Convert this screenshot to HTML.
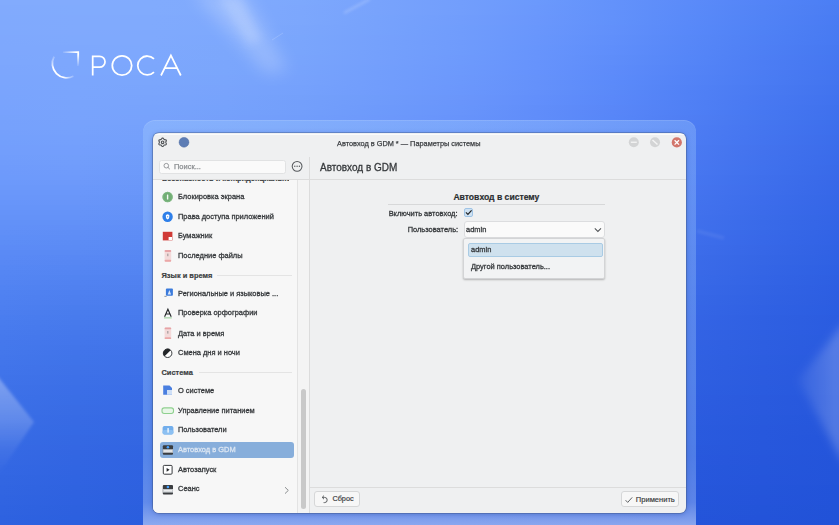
<!DOCTYPE html>
<html><head><meta charset="utf-8">
<style>
html,body{margin:0;padding:0;width:839px;height:525px;overflow:hidden}
body{position:relative;font-family:"Liberation Sans",sans-serif;background:#4f80f0}
#bg{position:absolute;left:0;top:0;width:839px;height:525px}
#bg i{position:absolute;left:0;width:839px;height:5px;display:block}
.abs{position:absolute}
#frame{position:absolute;left:143px;top:120px;width:553px;height:420px;border-radius:12px;
 background:linear-gradient(180deg,rgba(170,210,255,.3) 0%,rgba(170,210,255,.3) 80%,rgba(190,215,255,.36) 91%,rgba(220,232,255,.55) 96.5%);box-shadow:inset 0 1px 0 rgba(255,255,255,.12)}
#win{position:absolute;left:153px;top:133px;width:533px;height:380px;border-radius:6px;background:#eff0f1;overflow:hidden;
 box-shadow:0 0 0 .8px rgba(60,80,120,.45),0 1px 5px rgba(20,50,140,.35)}
.t{position:absolute;white-space:nowrap;line-height:1;font-size:7.45px;color:#3a3d40;-webkit-text-stroke:.18px currentColor}
#side .t:not(.b),.s{font-size:7.85px;transform:scaleX(.95);transform-origin:0 0;-webkit-text-stroke:.3px currentColor;color:#35383b}
.s.r{transform-origin:100% 0}
.b{font-weight:bold}
#side{position:absolute;left:0;top:46px;width:144px;height:334px;background:#f7f7f7;overflow:hidden}
#groove{position:absolute;left:144px;top:46px;width:12px;height:334px;background:#f4f4f4;border-left:1px solid #e3e3e3;box-sizing:border-box}
#handle{position:absolute;left:148px;top:256px;width:5px;height:120px;border-radius:3px;background:#c9c9c9}
.vline{position:absolute;width:1px;background:#dcdcdc}
.hline{position:absolute;height:1px;background:#dcdcdc}
.btn{position:absolute;box-sizing:border-box;border:1px solid #d6d7d8;border-radius:3px;background:#f7f7f7}
.ic{position:absolute}
</style></head><body>
<div id="bg"><i style="top:0px;background:linear-gradient(90deg,#82abfd 0%,#82abfd 9%,#81abfd 18%,#80aafd 27%,#7da8fd 36%,#78a3fc 45%,#729efc 55%,#6b99fc 64%,#6392fb 73%,#5b8bf9 82%,#5384f7 91%,#4b7ef4 100%)"></i><i style="top:5px;background:linear-gradient(90deg,#81aafd 0%,#81abfd 9%,#81abfd 18%,#80aafd 27%,#7da7fd 36%,#78a3fc 45%,#729efc 55%,#6b98fc 64%,#6392fb 73%,#5a8bf9 82%,#5284f6 91%,#4b7df3 100%)"></i><i style="top:10px;background:linear-gradient(90deg,#81aafd 0%,#81abfd 9%,#81abfd 18%,#7faafd 27%,#7ca7fd 36%,#78a3fc 45%,#729efc 55%,#6a98fc 64%,#6291fb 73%,#5a8af9 82%,#5283f6 91%,#4a7df3 100%)"></i><i style="top:15px;background:linear-gradient(90deg,#80aafd 0%,#81aafd 9%,#80aafd 18%,#7fa9fd 27%,#7ca7fd 36%,#77a3fc 45%,#719dfc 55%,#6a97fc 64%,#6291fb 73%,#598af9 82%,#5183f6 91%,#497cf3 100%)"></i><i style="top:20px;background:linear-gradient(90deg,#80a9fd 0%,#80aafd 9%,#80aafd 18%,#7fa9fd 27%,#7ca7fc 36%,#77a2fc 45%,#719dfc 55%,#6a97fc 64%,#6191fb 73%,#5989f9 82%,#5182f6 91%,#497bf3 100%)"></i><i style="top:25px;background:linear-gradient(90deg,#80a9fd 0%,#80aafd 9%,#80aafd 18%,#7ea9fd 27%,#7ba6fc 36%,#77a2fc 45%,#709dfc 55%,#6997fc 64%,#6190fb 73%,#5889f9 82%,#5082f6 91%,#487bf2 100%)"></i><i style="top:30px;background:linear-gradient(90deg,#7fa9fd 0%,#80a9fd 9%,#7fa9fd 18%,#7ea9fd 27%,#7ba6fc 36%,#76a2fc 45%,#709cfc 55%,#6996fc 64%,#6190fb 73%,#5888f9 82%,#4f81f5 91%,#487af2 100%)"></i><i style="top:35px;background:linear-gradient(90deg,#7fa8fd 0%,#7fa9fd 9%,#7fa9fd 18%,#7da8fd 27%,#7aa6fc 36%,#76a1fc 45%,#709cfc 55%,#6896fc 64%,#608ffb 73%,#5788f8 82%,#4f80f5 91%,#477af2 100%)"></i><i style="top:40px;background:linear-gradient(90deg,#7ea8fd 0%,#7fa9fd 9%,#7fa9fd 18%,#7da8fd 27%,#7aa5fc 36%,#75a1fc 45%,#6f9bfc 55%,#6895fc 64%,#608ffb 73%,#5787f8 82%,#4e80f5 91%,#4779f2 100%)"></i><i style="top:45px;background:linear-gradient(90deg,#7ea8fd 0%,#7ea8fd 9%,#7ea9fd 18%,#7da8fc 27%,#7aa5fc 36%,#75a1fc 45%,#6f9bfc 55%,#6795fc 64%,#5f8efb 73%,#5687f8 82%,#4e7ff5 91%,#4678f1 100%)"></i><i style="top:50px;background:linear-gradient(90deg,#7ea7fd 0%,#7ea8fd 9%,#7ea8fd 18%,#7ca7fc 27%,#79a5fc 36%,#74a0fc 45%,#6e9bfc 55%,#6794fc 64%,#5f8efb 73%,#5686f8 82%,#4d7ff4 91%,#4578f1 100%)"></i><i style="top:55px;background:linear-gradient(90deg,#7da7fd 0%,#7ea8fd 9%,#7da8fd 18%,#7ca7fc 27%,#79a4fc 36%,#74a0fc 45%,#6e9afc 55%,#6794fc 64%,#5e8dfa 73%,#5586f8 82%,#4d7ef4 91%,#4577f1 100%)"></i><i style="top:60px;background:linear-gradient(90deg,#7da7fd 0%,#7da7fd 9%,#7da7fd 18%,#7ba6fc 27%,#78a4fc 36%,#749ffc 45%,#6d9afc 55%,#6693fc 64%,#5e8dfa 73%,#5585f7 82%,#4c7df4 91%,#4477f0 100%)"></i><i style="top:65px;background:linear-gradient(90deg,#7ca6fd 0%,#7da7fd 9%,#7ca7fc 18%,#7ba6fc 27%,#78a3fc 36%,#739ffc 45%,#6d99fc 55%,#6693fc 64%,#5d8cfa 73%,#5484f7 82%,#4c7df4 91%,#4476f0 100%)"></i><i style="top:70px;background:linear-gradient(90deg,#7ca6fd 0%,#7ca7fd 9%,#7ca7fc 18%,#7aa6fc 27%,#77a3fc 36%,#729efc 45%,#6c99fc 55%,#6592fc 64%,#5d8bfa 73%,#5484f7 82%,#4b7cf3 91%,#4375f0 100%)"></i><i style="top:75px;background:linear-gradient(90deg,#7ba6fd 0%,#7ca6fd 9%,#7ba6fc 18%,#7aa5fc 27%,#77a2fc 36%,#729efc 45%,#6c98fc 55%,#6592fb 64%,#5c8bfa 73%,#5383f7 82%,#4a7cf3 91%,#4375ef 100%)"></i><i style="top:80px;background:linear-gradient(90deg,#7ba5fd 0%,#7ba6fd 9%,#7ba6fc 18%,#79a5fc 27%,#76a2fc 36%,#719dfc 45%,#6b98fc 55%,#6491fb 64%,#5b8afa 73%,#5383f6 82%,#4a7bf3 91%,#4274ef 100%)"></i><i style="top:85px;background:linear-gradient(90deg,#7aa5fd 0%,#7ba6fd 9%,#7aa5fc 18%,#79a4fc 27%,#75a1fc 36%,#719dfc 45%,#6b97fc 55%,#6491fb 64%,#5b8af9 73%,#5282f6 82%,#497af2 91%,#4173ef 100%)"></i><i style="top:90px;background:linear-gradient(90deg,#7aa4fd 0%,#7aa5fd 9%,#7aa5fc 18%,#78a3fc 27%,#75a1fc 36%,#709cfc 45%,#6a97fc 55%,#6390fb 64%,#5a89f9 73%,#5181f6 82%,#497af2 91%,#4173ee 100%)"></i><i style="top:95px;background:linear-gradient(90deg,#79a4fd 0%,#7aa5fd 9%,#79a4fc 18%,#77a3fc 27%,#74a0fb 36%,#6f9cfb 45%,#6a96fb 55%,#628ffb 64%,#5a88f9 73%,#5181f6 82%,#4879f2 91%,#4072ee 100%)"></i><i style="top:100px;background:linear-gradient(90deg,#79a3fd 0%,#79a4fc 9%,#79a4fc 18%,#77a2fc 27%,#739ffb 36%,#6f9bfb 45%,#6995fb 55%,#628ffb 64%,#5988f9 73%,#5080f5 82%,#4878f1 91%,#4072ee 100%)"></i><i style="top:105px;background:linear-gradient(90deg,#78a3fd 0%,#79a4fc 9%,#78a3fc 18%,#76a2fc 27%,#739ffb 36%,#6e9afb 45%,#6895fb 55%,#618efa 64%,#5987f8 73%,#5080f5 82%,#4778f1 91%,#3f71ed 100%)"></i><i style="top:110px;background:linear-gradient(90deg,#78a2fd 0%,#78a3fc 9%,#77a3fc 18%,#75a1fb 27%,#729efb 36%,#6d9afb 45%,#6894fb 55%,#608dfa 64%,#5886f8 73%,#4f7ff5 82%,#4677f1 91%,#3f70ed 100%)"></i><i style="top:115px;background:linear-gradient(90deg,#77a2fc 0%,#78a3fc 9%,#77a2fc 18%,#75a0fb 27%,#719dfb 36%,#6d99fb 45%,#6793fb 55%,#608dfa 64%,#5786f8 73%,#4f7ef4 82%,#4677f0 91%,#3e70ed 100%)"></i><i style="top:120px;background:linear-gradient(90deg,#76a1fc 0%,#77a2fc 9%,#76a2fc 18%,#74a0fb 27%,#709dfb 36%,#6c98fb 45%,#6693fa 55%,#5f8cf9 64%,#5785f7 73%,#4e7ef4 82%,#4576f0 91%,#3d6fec 100%)"></i><i style="top:125px;background:linear-gradient(90deg,#76a1fc 0%,#76a2fc 9%,#75a1fc 18%,#739ffb 27%,#709cfb 36%,#6b98fa 45%,#6592fa 55%,#5e8bf9 64%,#5684f7 73%,#4d7df4 82%,#4575f0 91%,#3d6eec 100%)"></i><i style="top:130px;background:linear-gradient(90deg,#75a0fc 0%,#76a1fc 9%,#75a0fb 18%,#729efb 27%,#6f9bfa 36%,#6a97fa 45%,#6491fa 55%,#5e8bf9 64%,#5584f7 73%,#4d7cf3 82%,#4475ef 91%,#3c6eec 100%)"></i><i style="top:135px;background:linear-gradient(90deg,#74a0fc 0%,#75a0fc 9%,#74a0fb 18%,#719efb 27%,#6e9afa 36%,#6996fa 45%,#6491f9 55%,#5d8af8 64%,#5583f6 73%,#4c7cf3 82%,#4474ef 91%,#3c6deb 100%)"></i><i style="top:140px;background:linear-gradient(90deg,#739ffc 0%,#74a0fc 9%,#739ffb 18%,#709dfa 27%,#6d9afa 36%,#6895fa 45%,#6390f9 55%,#5c89f8 64%,#5482f6 73%,#4c7bf3 82%,#4374ef 91%,#3b6deb 100%)"></i><i style="top:145px;background:linear-gradient(90deg,#739efc 0%,#739ffc 9%,#729efb 18%,#6f9cfa 27%,#6c99fa 36%,#6895f9 45%,#628ff9 55%,#5b89f8 64%,#5382f5 73%,#4b7af2 82%,#4373ee 91%,#3b6ceb 100%)"></i><i style="top:150px;background:linear-gradient(90deg,#729efc 0%,#739efc 9%,#719efb 18%,#6f9bfa 27%,#6b98f9 36%,#6794f9 45%,#618ef8 55%,#5a88f7 64%,#5381f5 73%,#4a7af2 82%,#4272ee 91%,#3a6cea 100%)"></i><i style="top:155px;background:linear-gradient(90deg,#719dfc 0%,#729efb 9%,#709dfa 18%,#6e9afa 27%,#6a97f9 36%,#6693f9 45%,#608df8 55%,#5a87f7 64%,#5280f5 73%,#4a79f2 82%,#4172ee 91%,#3a6bea 100%)"></i><i style="top:160px;background:linear-gradient(90deg,#709cfb 0%,#719dfb 9%,#6f9cfa 18%,#6d99f9 27%,#6996f9 36%,#6592f8 45%,#5f8df8 55%,#5986f7 64%,#5180f4 73%,#4978f1 82%,#4171ed 91%,#396bea 100%)"></i><i style="top:165px;background:linear-gradient(90deg,#6f9bfb 0%,#709cfb 9%,#6e9bfa 18%,#6c99f9 27%,#6895f8 36%,#6491f8 45%,#5e8cf7 55%,#5886f6 64%,#507ff4 73%,#4878f1 82%,#4071ed 91%,#396ae9 100%)"></i><i style="top:170px;background:linear-gradient(90deg,#6e9afb 0%,#6f9bfb 9%,#6d9afa 18%,#6b98f9 27%,#6794f8 36%,#6390f8 45%,#5e8bf7 55%,#5785f6 64%,#507ef3 73%,#4877f0 82%,#4070ed 91%,#386ae9 100%)"></i><i style="top:175px;background:linear-gradient(90deg,#6d9afb 0%,#6e9afb 9%,#6c99f9 18%,#6997f8 27%,#6694f8 36%,#628ff7 45%,#5d8af7 55%,#5684f5 64%,#4f7df3 73%,#4776f0 82%,#3f6fec 91%,#3869e9 100%)"></i><i style="top:180px;background:linear-gradient(90deg,#6c99fb 0%,#6d99fa 9%,#6b98f9 18%,#6896f8 27%,#6593f7 36%,#618ef7 45%,#5c89f6 55%,#5583f5 64%,#4e7df3 73%,#4676f0 82%,#3e6fec 91%,#3768e8 100%)"></i><i style="top:185px;background:linear-gradient(90deg,#6b98fa 0%,#6b98fa 9%,#6a97f9 18%,#6795f8 27%,#6492f7 36%,#608ef7 45%,#5b88f6 55%,#5482f4 64%,#4d7cf2 73%,#4675ef 82%,#3e6eec 91%,#3668e8 100%)"></i><i style="top:190px;background:linear-gradient(90deg,#6a97fa 0%,#6a97fa 9%,#6996f9 18%,#6694f7 27%,#6391f7 36%,#5f8df6 45%,#5a88f5 55%,#5482f4 64%,#4c7bf2 73%,#4574ef 82%,#3d6eeb 91%,#3667e8 100%)"></i><i style="top:195px;background:linear-gradient(90deg,#6996fa 0%,#6996f9 9%,#6795f8 18%,#6593f7 27%,#6290f6 36%,#5e8cf6 45%,#5987f5 55%,#5381f4 64%,#4c7af1 73%,#4474ee 82%,#3c6deb 91%,#3567e7 100%)"></i><i style="top:200px;background:linear-gradient(90deg,#6795fa 0%,#6895f9 9%,#6694f8 18%,#6492f7 27%,#618ff6 36%,#5d8bf5 45%,#5886f5 55%,#5280f3 64%,#4b7af1 73%,#4373ee 82%,#3c6ceb 91%,#3566e7 100%)"></i><i style="top:205px;background:linear-gradient(90deg,#6694f9 0%,#6694f9 9%,#6593f7 18%,#6291f6 27%,#608ef6 36%,#5c8af5 45%,#5785f4 55%,#517ff3 64%,#4a79f0 73%,#4372ee 82%,#3b6cea 91%,#3466e7 100%)"></i><i style="top:210px;background:linear-gradient(90deg,#6593f9 0%,#6593f8 9%,#6492f7 18%,#6190f6 27%,#5e8df5 36%,#5b89f5 45%,#5684f4 55%,#507ef2 64%,#4978f0 73%,#4272ed 82%,#3b6bea 91%,#3465e7 100%)"></i><i style="top:215px;background:linear-gradient(90deg,#6492f8 0%,#6492f8 9%,#6291f7 18%,#608ff6 27%,#5d8cf5 36%,#5a88f4 45%,#5583f3 55%,#4f7ef2 64%,#4978f0 73%,#4171ed 82%,#3a6be9 91%,#3365e6 100%)"></i><i style="top:220px;background:linear-gradient(90deg,#6291f8 0%,#6291f7 9%,#618ff6 18%,#5f8df5 27%,#5c8bf4 36%,#5987f4 45%,#5482f3 55%,#4e7df1 64%,#4877ef 73%,#4170ec 82%,#396ae9 91%,#3364e6 100%)"></i><i style="top:225px;background:linear-gradient(90deg,#6190f8 0%,#618ff7 9%,#5f8ef6 18%,#5e8cf5 27%,#5b8af4 36%,#5786f3 45%,#5381f2 55%,#4d7cf1 64%,#4776ef 73%,#4070ec 82%,#396ae9 91%,#3264e6 100%)"></i><i style="top:230px;background:linear-gradient(90deg,#608ff7 0%,#5f8ef6 9%,#5e8df5 18%,#5c8bf4 27%,#5a89f3 36%,#5685f3 45%,#5281f2 55%,#4d7bf0 64%,#4675ee 73%,#3f6feb 82%,#3869e8 91%,#3263e5 100%)"></i><i style="top:235px;background:linear-gradient(90deg,#5e8ef7 0%,#5e8df6 9%,#5d8cf5 18%,#5b8af4 27%,#5988f3 36%,#5584f2 45%,#5180f1 55%,#4c7af0 64%,#4575ee 73%,#3f6eeb 82%,#3868e8 91%,#3163e5 100%)"></i><i style="top:240px;background:linear-gradient(90deg,#5d8df6 0%,#5c8cf5 9%,#5b8bf4 18%,#5a89f3 27%,#5786f3 36%,#5483f2 45%,#507ff1 55%,#4b7af0 64%,#4574ed 73%,#3e6eeb 82%,#3768e8 91%,#3162e5 100%)"></i><i style="top:245px;background:linear-gradient(90deg,#5c8bf6 0%,#5b8bf5 9%,#5a8af4 18%,#5888f3 27%,#5685f2 36%,#5382f1 45%,#4f7ef1 55%,#4a79ef 64%,#4473ed 73%,#3d6dea 82%,#3767e7 91%,#3062e4 100%)"></i><i style="top:250px;background:linear-gradient(90deg,#5a8af5 0%,#5a8af4 9%,#5888f3 18%,#5787f2 27%,#5584f2 36%,#5281f1 45%,#4e7df0 55%,#4978ef 64%,#4372ed 73%,#3d6dea 82%,#3667e7 91%,#3061e4 100%)"></i><i style="top:255px;background:linear-gradient(90deg,#5989f5 0%,#5888f4 9%,#5787f3 18%,#5686f2 27%,#5483f1 36%,#5180f1 45%,#4d7cf0 55%,#4877ee 64%,#4272ec 73%,#3c6ce9 82%,#3566e6 91%,#2f61e4 100%)"></i><i style="top:260px;background:linear-gradient(90deg,#5888f4 0%,#5787f3 9%,#5686f2 18%,#5585f1 27%,#5382f1 36%,#507ff0 45%,#4c7bef 55%,#4776ee 64%,#4271ec 73%,#3b6be9 82%,#3566e6 91%,#2f61e3 100%)"></i><i style="top:265px;background:linear-gradient(90deg,#5687f4 0%,#5586f3 9%,#5485f2 18%,#5383f1 27%,#5281f0 36%,#4f7ef0 45%,#4b7aef 55%,#4676ed 64%,#4170eb 73%,#3b6be9 82%,#3465e6 91%,#2e60e3 100%)"></i><i style="top:270px;background:linear-gradient(90deg,#5586f3 0%,#5485f2 9%,#5384f1 18%,#5282f0 27%,#5080f0 36%,#4e7def 45%,#4a79ee 55%,#4675ed 64%,#4070eb 73%,#3a6ae8 82%,#3465e5 91%,#2e60e3 100%)"></i><i style="top:275px;background:linear-gradient(90deg,#5485f3 0%,#5284f1 9%,#5282f0 18%,#5181f0 27%,#4f7fef 36%,#4d7cef 45%,#4979ee 55%,#4574ec 64%,#3f6fea 73%,#396ae8 82%,#3364e5 91%,#2e5fe2 100%)"></i><i style="top:280px;background:linear-gradient(90deg,#5384f2 0%,#5182f1 9%,#5081f0 18%,#4f80ef 27%,#4e7eef 36%,#4c7bee 45%,#4878ed 55%,#4473ec 64%,#3f6eea 73%,#3969e7 82%,#3364e5 91%,#2d5fe2 100%)"></i><i style="top:285px;background:linear-gradient(90deg,#5183f2 0%,#5081f0 9%,#4f80ef 18%,#4e7fef 27%,#4d7dee 36%,#4b7aee 45%,#4777ed 55%,#4373ec 64%,#3e6eea 73%,#3868e7 82%,#3263e4 91%,#2d5ee2 100%)"></i><i style="top:290px;background:linear-gradient(90deg,#5082f1 0%,#4e80f0 9%,#4d7fef 18%,#4d7eee 27%,#4c7cee 36%,#4a7aed 45%,#4676ec 55%,#4272eb 64%,#3d6de9 73%,#3868e7 82%,#3263e4 91%,#2c5ee2 100%)"></i><i style="top:295px;background:linear-gradient(90deg,#4f81f1 0%,#4d7fef 9%,#4c7eee 18%,#4c7dee 27%,#4b7bed 36%,#4979ed 45%,#4675ec 55%,#4171eb 64%,#3c6ce9 73%,#3767e6 82%,#3162e4 91%,#2c5ee1 100%)"></i><i style="top:300px;background:linear-gradient(90deg,#4e80f0 0%,#4c7eef 9%,#4b7dee 18%,#4b7ced 27%,#4a7aed 36%,#4878ec 45%,#4574ec 55%,#4170ea 64%,#3c6ce8 73%,#3667e6 82%,#3162e3 91%,#2c5de1 100%)"></i><i style="top:305px;background:linear-gradient(90deg,#4d7ff0 0%,#4a7dee 9%,#4a7ced 18%,#497bed 27%,#4979ec 36%,#4777ec 45%,#4474eb 55%,#4070ea 64%,#3b6be8 73%,#3666e6 82%,#3061e3 91%,#2b5de1 100%)"></i><i style="top:310px;background:linear-gradient(90deg,#4c7eef 0%,#497ced 9%,#487bed 18%,#487aec 27%,#4778ec 36%,#4676eb 45%,#4373eb 55%,#3f6fe9 64%,#3a6ae8 73%,#3566e5 82%,#3061e3 91%,#2b5de1 100%)"></i><i style="top:315px;background:linear-gradient(90deg,#4a7def 0%,#487bed 9%,#477aec 18%,#4779ec 27%,#4677eb 36%,#4575eb 45%,#4272ea 55%,#3e6ee9 64%,#3a6ae7 73%,#3565e5 82%,#2f60e2 91%,#2b5ce0 100%)"></i><i style="top:320px;background:linear-gradient(90deg,#497cee 0%,#477aec 9%,#4679ec 18%,#4678eb 27%,#4576eb 36%,#4474eb 45%,#4171ea 55%,#3d6de9 64%,#3969e7 73%,#3464e5 82%,#2f60e2 91%,#2a5ce0 100%)"></i><i style="top:325px;background:linear-gradient(90deg,#487bee 0%,#4679ec 9%,#4578eb 18%,#4577eb 27%,#4475eb 36%,#4373ea 45%,#4070e9 55%,#3d6de8 64%,#3868e6 73%,#3464e4 82%,#2f60e2 91%,#2a5ce0 100%)"></i><i style="top:330px;background:linear-gradient(90deg,#477aed 0%,#4578eb 9%,#4477eb 18%,#4476ea 27%,#4374ea 36%,#4272ea 45%,#3f6fe9 55%,#3c6ce8 64%,#3868e6 73%,#3363e4 82%,#2e5fe2 91%,#2a5be0 100%)"></i><i style="top:335px;background:linear-gradient(90deg,#4679ed 0%,#4477eb 9%,#4376ea 18%,#4375ea 27%,#4274ea 36%,#4172e9 45%,#3e6fe9 55%,#3b6be7 64%,#3767e6 73%,#3363e4 82%,#2e5fe1 91%,#295bdf 100%)"></i><i style="top:340px;background:linear-gradient(90deg,#4578ec 0%,#4376eb 9%,#4275ea 18%,#4274e9 27%,#4173e9 36%,#4071e9 45%,#3e6ee8 55%,#3a6ae7 64%,#3667e5 73%,#3262e3 82%,#2d5ee1 91%,#295bdf 100%)"></i><i style="top:345px;background:linear-gradient(90deg,#4478ec 0%,#4275ea 9%,#4174e9 18%,#4173e9 27%,#4072e9 36%,#3f70e8 45%,#3d6de8 55%,#3a6ae7 64%,#3666e5 73%,#3162e3 82%,#2d5ee1 91%,#295adf 100%)"></i><i style="top:350px;background:linear-gradient(90deg,#4477eb 0%,#4174ea 9%,#4073e9 18%,#4072e9 27%,#3f71e8 36%,#3e6fe8 45%,#3c6ce7 55%,#3969e6 64%,#3565e5 73%,#3161e3 82%,#2d5de1 91%,#295adf 100%)"></i><i style="top:355px;background:linear-gradient(90deg,#4376eb 0%,#4074e9 9%,#3f72e8 18%,#3f71e8 27%,#3e70e8 36%,#3d6ee8 45%,#3b6ce7 55%,#3868e6 64%,#3565e4 73%,#3161e2 82%,#2c5de0 91%,#285ade 100%)"></i><i style="top:360px;background:linear-gradient(90deg,#4275ea 0%,#3f73e9 9%,#3e71e8 18%,#3e70e8 27%,#3e6fe7 36%,#3c6de7 45%,#3a6be6 55%,#3868e5 64%,#3464e4 73%,#3060e2 82%,#2c5de0 91%,#2859de 100%)"></i><i style="top:365px;background:linear-gradient(90deg,#4174ea 0%,#3f72e8 9%,#3d71e8 18%,#3d70e7 27%,#3d6ee7 36%,#3c6de7 45%,#3a6ae6 55%,#3767e5 64%,#3364e4 73%,#3060e2 82%,#2c5ce0 91%,#2859de 100%)"></i><i style="top:370px;background:linear-gradient(90deg,#4074ea 0%,#3e71e8 9%,#3d70e7 18%,#3c6fe7 27%,#3c6ee7 36%,#3b6ce6 45%,#3969e6 55%,#3666e5 64%,#3363e3 73%,#2f5fe1 82%,#2b5ce0 91%,#2859de 100%)"></i><i style="top:375px;background:linear-gradient(90deg,#3f73e9 0%,#3d70e8 9%,#3c6fe7 18%,#3b6ee6 27%,#3b6de6 36%,#3a6be6 45%,#3869e5 55%,#3666e4 64%,#3263e3 73%,#2f5fe1 82%,#2b5cdf 91%,#2759de 100%)"></i><i style="top:380px;background:linear-gradient(90deg,#3f72e9 0%,#3c70e7 9%,#3b6ee6 18%,#3b6de6 27%,#3a6ce6 36%,#396ae5 45%,#3768e5 55%,#3565e4 64%,#3262e3 73%,#2e5fe1 82%,#2b5bdf 91%,#2758dd 100%)"></i><i style="top:385px;background:linear-gradient(90deg,#3e71e8 0%,#3b6fe7 9%,#3a6de6 18%,#3a6ce6 27%,#396be5 36%,#386ae5 45%,#3767e4 55%,#3465e4 64%,#3161e2 73%,#2e5ee1 82%,#2a5bdf 91%,#2758dd 100%)"></i><i style="top:390px;background:linear-gradient(90deg,#3d71e8 0%,#3b6ee7 9%,#396de6 18%,#396ce5 27%,#396ae5 36%,#3869e5 45%,#3667e4 55%,#3464e3 64%,#3161e2 73%,#2d5ee0 82%,#2a5bdf 91%,#2758dd 100%)"></i><i style="top:395px;background:linear-gradient(90deg,#3c70e8 0%,#3a6ee6 9%,#396ce5 18%,#386be5 27%,#386ae5 36%,#3768e4 45%,#3566e4 55%,#3363e3 64%,#3060e2 73%,#2d5de0 82%,#2a5ade 91%,#2657dd 100%)"></i><i style="top:400px;background:linear-gradient(90deg,#3c6fe7 0%,#396de6 9%,#386be5 18%,#376ae4 27%,#3769e4 36%,#3667e4 45%,#3565e3 55%,#3263e2 64%,#3060e1 73%,#2c5de0 82%,#295ade 91%,#2657dc 100%)"></i><i style="top:405px;background:linear-gradient(90deg,#3b6fe7 0%,#396ce5 9%,#376be5 18%,#3769e4 27%,#3668e4 36%,#3567e4 45%,#3465e3 55%,#3262e2 64%,#2f5fe1 73%,#2c5ce0 82%,#295ade 91%,#2657dc 100%)"></i><i style="top:410px;background:linear-gradient(90deg,#3a6ee6 0%,#386ce5 9%,#376ae4 18%,#3669e4 27%,#3567e3 36%,#3566e3 45%,#3364e3 55%,#3162e2 64%,#2f5fe1 73%,#2c5cdf 82%,#2959de 91%,#2657dc 100%)"></i><i style="top:415px;background:linear-gradient(90deg,#396de6 0%,#376be5 9%,#3669e4 18%,#3568e3 27%,#3567e3 36%,#3465e3 45%,#3363e2 55%,#3161e1 64%,#2e5ee0 73%,#2b5cdf 82%,#2859dd 91%,#2556dc 100%)"></i><i style="top:420px;background:linear-gradient(90deg,#396de6 0%,#376ae4 9%,#3568e3 18%,#3567e3 27%,#3466e3 36%,#3365e2 45%,#3263e2 55%,#3061e1 64%,#2e5ee0 73%,#2b5bdf 82%,#2859dd 91%,#2556dc 100%)"></i><i style="top:425px;background:linear-gradient(90deg,#386ce5 0%,#366ae4 9%,#3568e3 18%,#3467e3 27%,#3365e2 36%,#3364e2 45%,#3162e2 55%,#2f60e1 64%,#2d5de0 73%,#2a5bde 82%,#2858dd 91%,#2556db 100%)"></i><i style="top:430px;background:linear-gradient(90deg,#386be5 0%,#3569e4 9%,#3467e3 18%,#3366e2 27%,#3365e2 36%,#3263e2 45%,#3162e1 55%,#2f5fe0 64%,#2d5ddf 73%,#2a5ade 82%,#2758dd 91%,#2556db 100%)"></i><i style="top:435px;background:linear-gradient(90deg,#376be5 0%,#3568e3 9%,#3367e2 18%,#3365e2 27%,#3264e2 36%,#3163e1 45%,#3061e1 55%,#2e5fe0 64%,#2c5cdf 73%,#2a5ade 82%,#2758dd 91%,#2455db 100%)"></i><i style="top:440px;background:linear-gradient(90deg,#366ae4 0%,#3468e3 9%,#3366e2 18%,#3265e2 27%,#3163e1 36%,#3162e1 45%,#2f60e1 55%,#2e5ee0 64%,#2c5cdf 73%,#295ade 82%,#2757dc 91%,#2455db 100%)"></i><i style="top:445px;background:linear-gradient(90deg,#3669e4 0%,#3467e3 9%,#3265e2 18%,#3164e1 27%,#3163e1 36%,#3061e1 45%,#2f60e0 55%,#2d5ee0 64%,#2b5cdf 73%,#2959dd 82%,#2757dc 91%,#2455db 100%)"></i><i style="top:450px;background:linear-gradient(90deg,#3569e4 0%,#3366e2 9%,#3165e1 18%,#3163e1 27%,#3062e1 36%,#2f61e0 45%,#2e5fe0 55%,#2d5ddf 64%,#2b5bde 73%,#2859dd 82%,#2657dc 91%,#2455db 100%)"></i><i style="top:455px;background:linear-gradient(90deg,#3568e4 0%,#3266e2 9%,#3164e1 18%,#3063e1 27%,#2f62e0 36%,#2f60e0 45%,#2e5fe0 55%,#2c5ddf 64%,#2a5bde 73%,#2858dd 82%,#2656dc 91%,#2455da 100%)"></i><i style="top:460px;background:linear-gradient(90deg,#3468e3 0%,#3265e2 9%,#3063e1 18%,#2f62e0 27%,#2f61e0 36%,#2e60e0 45%,#2d5edf 55%,#2c5cdf 64%,#2a5ade 73%,#2858dd 82%,#2656db 91%,#2354da 100%)"></i><i style="top:465px;background:linear-gradient(90deg,#3367e3 0%,#3165e2 9%,#3063e1 18%,#2f62e0 27%,#2e60e0 36%,#2d5fdf 45%,#2c5edf 55%,#2b5cde 64%,#295add 73%,#2758dc 82%,#2556db 91%,#2354da 100%)"></i><i style="top:470px;background:linear-gradient(90deg,#3367e3 0%,#3164e1 9%,#2f62e0 18%,#2e61e0 27%,#2e60df 36%,#2d5fdf 45%,#2c5ddf 55%,#2b5bde 64%,#2959dd 73%,#2757dc 82%,#2556db 91%,#2354da 100%)"></i><i style="top:475px;background:linear-gradient(90deg,#3266e2 0%,#3064e1 9%,#2f62e0 18%,#2e60df 27%,#2d5fdf 36%,#2c5edf 45%,#2b5dde 55%,#2a5bde 64%,#2859dd 73%,#2757dc 82%,#2555db 91%,#2354da 100%)"></i><i style="top:480px;background:linear-gradient(90deg,#3266e2 0%,#3063e1 9%,#2e61e0 18%,#2d60df 27%,#2c5fdf 36%,#2c5dde 45%,#2b5cde 55%,#2a5add 64%,#2859dd 73%,#2657dc 82%,#2555db 91%,#2354d9 100%)"></i><i style="top:485px;background:linear-gradient(90deg,#3165e2 0%,#2f63e0 9%,#2e61df 18%,#2d5fdf 27%,#2c5ede 36%,#2b5dde 45%,#2a5cde 55%,#295add 64%,#2858dc 73%,#2656db 82%,#2455da 91%,#2253d9 100%)"></i><i style="top:490px;background:linear-gradient(90deg,#3165e1 0%,#2f62e0 9%,#2d60df 18%,#2c5fdf 27%,#2b5ede 36%,#2b5cde 45%,#2a5bdd 55%,#2959dd 64%,#2758dc 73%,#2656db 82%,#2455da 91%,#2253d9 100%)"></i><i style="top:495px;background:linear-gradient(90deg,#3064e1 0%,#2e62e0 9%,#2c60df 18%,#2b5ede 27%,#2b5dde 36%,#2a5cdd 45%,#295add 55%,#2859dd 64%,#2757dc 73%,#2556db 82%,#2454da 91%,#2253d9 100%)"></i><i style="top:500px;background:linear-gradient(90deg,#3064e1 0%,#2e61e0 9%,#2c5fdf 18%,#2b5ede 27%,#2a5dde 36%,#2a5bdd 45%,#295add 55%,#2859dc 64%,#2657dc 73%,#2555db 82%,#2454da 91%,#2253d9 100%)"></i><i style="top:505px;background:linear-gradient(90deg,#2f63e1 0%,#2d61df 9%,#2b5fde 18%,#2a5dde 27%,#2a5cdd 36%,#295bdd 45%,#285adc 55%,#2758dc 64%,#2657db 73%,#2555da 82%,#2354d9 91%,#2253d8 100%)"></i><i style="top:510px;background:linear-gradient(90deg,#2f63e0 0%,#2d60df 9%,#2b5ede 18%,#2a5ddd 27%,#295bdd 36%,#285add 45%,#2859dc 55%,#2758dc 64%,#2656db 73%,#2455da 82%,#2354d9 91%,#2152d8 100%)"></i><i style="top:515px;background:linear-gradient(90deg,#2e62e0 0%,#2c60df 9%,#2a5ede 18%,#295cdd 27%,#295bdd 36%,#285adc 45%,#2759dc 55%,#2657db 64%,#2556db 73%,#2454da 82%,#2353d9 91%,#2152d8 100%)"></i><i style="top:520px;background:linear-gradient(90deg,#2e62e0 0%,#2c5fdf 9%,#2a5dde 18%,#295cdd 27%,#285adc 36%,#2759dc 45%,#2758dc 55%,#2657db 64%,#2555da 73%,#2454da 82%,#2253d9 91%,#2152d8 100%)"></i></div>
<div id="frame"></div>

<!-- logo -->
<svg class="abs" style="left:0px;top:0px" width="839" height="525">
  <defs>
    <filter id="bl8" x="-50%" y="-50%" width="200%" height="200%"><feGaussianBlur stdDeviation="8"/></filter>
    <filter id="bl4" x="-50%" y="-50%" width="200%" height="200%"><feGaussianBlur stdDeviation="4"/></filter>
    <filter id="bl2" x="-50%" y="-50%" width="200%" height="200%"><feGaussianBlur stdDeviation="1.5"/></filter>
    <filter id="bl1" x="-50%" y="-50%" width="200%" height="200%"><feGaussianBlur stdDeviation=".7"/></filter>
    <linearGradient id="lg1" x1="0" y1="373" x2="0" y2="475" gradientUnits="userSpaceOnUse">
      <stop offset="0" stop-color="#fff" stop-opacity=".34"/>
      <stop offset=".45" stop-color="#fff" stop-opacity=".2"/>
      <stop offset=".75" stop-color="#fff" stop-opacity=".06"/>
      <stop offset="1" stop-color="#fff" stop-opacity="0"/>
    </linearGradient>
    <linearGradient id="lg2" x1="798" y1="0" x2="839" y2="0" gradientUnits="userSpaceOnUse">
      <stop offset="0" stop-color="#fff" stop-opacity=".05"/>
      <stop offset="1" stop-color="#fff" stop-opacity=".22"/>
    </linearGradient>
    <filter id="bl6" x="-50%" y="-50%" width="200%" height="200%"><feGaussianBlur stdDeviation="6"/></filter>
    <filter id="bl3" x="-50%" y="-50%" width="200%" height="200%"><feGaussianBlur stdDeviation="3"/></filter>
    <linearGradient id="arcg" x1="0" y1="0" x2="1" y2="1">
      <stop offset="0" stop-color="#fff" stop-opacity=".1"/>
      <stop offset=".3" stop-color="#fff" stop-opacity="1"/>
      <stop offset=".75" stop-color="#fff" stop-opacity="1"/>
      <stop offset="1" stop-color="#fff" stop-opacity=".1"/>
    </linearGradient>
    <linearGradient id="cornerg" x1="0" y1="0" x2="1" y2="1">
      <stop offset="0" stop-color="#fff" stop-opacity=".1"/>
      <stop offset=".45" stop-color="#fff" stop-opacity="1"/>
      <stop offset=".6" stop-color="#fff" stop-opacity="1"/>
      <stop offset="1" stop-color="#fff" stop-opacity=".1"/>
    </linearGradient>
  </defs>
  <!-- streaks -->
  <path d="M192 -8 L244 -8 L288 70 L266 74 Z" fill="#fff" opacity=".2" filter="url(#bl8)"/>
  <path d="M218 -4 L240 -4 L262 40 L248 44 Z" fill="#fff" opacity=".16" filter="url(#bl4)"/>
  <path d="M272 40 L283 33" stroke="#fff" stroke-width=".8" opacity=".2" filter="url(#bl1)"/>
  <path d="M344 13 L370 -1" stroke="#fff" stroke-width="2" opacity=".22" filter="url(#bl2)"/>
  <path d="M-5 373 L34 422 L-5 480 Z" fill="url(#lg1)" filter="url(#bl2)"/>
  <path d="M845 322 L798 380 L845 466 Z" fill="url(#lg2)" filter="url(#bl4)"/>
  <path d="M800 380.5 L839 380.5" stroke="#fff" stroke-width="1.2" opacity=".22" filter="url(#bl1)"/>
  <path d="M697 231 L724 238" stroke="#fff" stroke-width="3" opacity=".08" filter="url(#bl2)"/>
  <!-- logo icon -->
  <path d="M54 56.5 A14.5 14.5 0 0 0 73.5 76.2" fill="none" stroke="url(#arcg)" stroke-width="1.8"/>
  <path d="M63 52.2 L78.2 52.2 L78.2 66" fill="none" stroke="url(#cornerg)" stroke-width="1.8"/>
  <!-- POCA -->
  <g fill="none" stroke="#fff" stroke-width="1.75">
    <path d="M92.7 75.4 L92.7 56.3 L99.6 56.3 A5.45 5.45 0 0 1 99.6 67.2 L92.7 67.2"/>
    <circle cx="122" cy="65.5" r="9.7"/>
    <path d="M154 58.8 A9.5 9.5 0 1 0 154 72.2"/>
    <path d="M161 75.5 L170.9 55.4 L180.8 75.5 M165.3 68 L176.5 68"/>
  </g>
</svg>


<div id="win">
  <!-- coordinates inside window: x-153, y-133 -->
  <div class="hline" style="left:0;top:0.6px;width:533px;background:#fafbfb"></div>
  <div id="side">
    <div class="t b" style="left:9px;top:-3.8px;width:127px;overflow:hidden">Безопасность и конфиденциальность</div>
    <svg class="ic" style="left:0px;top:0px" width="144" height="334" viewBox="0 46 144 334">
      <!-- lock screen green -->
      <circle cx="14.6" cy="64" r="5.2" fill="#72ae75"/>
      <circle cx="14.6" cy="64" r="4.7" fill="none" stroke="#8cc28e" stroke-width=".5"/>
      <rect x="13.9" y="61.6" width="1.4" height="4.8" rx=".5" fill="#f4faf4"/>
      <!-- permissions blue -->
      <circle cx="14.6" cy="83.8" r="5.2" fill="#2e7fe9"/>
      <path d="M12.9 82 L14.6 81.3 L16.3 82 L16.3 84 Q16.3 85.9 14.6 86.5 Q12.9 85.9 12.9 84 Z" fill="#fff"/>
      <circle cx="14.6" cy="83.7" r=".7" fill="#6aa6f0"/>
      <!-- wallet red -->
      <rect x="9.8" y="98.8" width="9.6" height="8.6" fill="#d03a36"/>
      <rect x="15.6" y="104" width="3.4" height="3.2" fill="#fff"/>
      <!-- recent files -->
      <rect x="11.6" y="117" width="6.6" height="11.8" rx="1" fill="#f3dada"/>
      <rect x="11.6" y="117" width="6.6" height="2" rx="1" fill="#e7a3a6"/>
      <rect x="11.6" y="126.8" width="6.6" height="2" rx="1" fill="#eba8a8"/>
      <rect x="14.4" y="120.6" width=".9" height="2.6" fill="#8a8a8a"/>
      <g transform="translate(0 0.2)">
      <!-- regional -->
      <rect x="12.9" y="155.3" width="7" height="7.2" rx=".9" fill="#3b7bdc"/>
      <path d="M14.7 161.2 L16.4 156.9 L18.1 161.2 Z" fill="#dbe8fa"/>
      <rect x="11.4" y="162.6" width="2.2" height="1.2" fill="#a0a4a8"/>
      <!-- spell -->
      <path d="M11.6 183.5 L14.9 176 L18.2 183.5 M12.9 180.8 L16.9 180.8" stroke="#232629" stroke-width="1.1" fill="none"/>
      <rect x="11" y="184.3" width="7.8" height=".8" fill="#7cc27c"/>
      <!-- date -->
      <rect x="11.6" y="194.3" width="6.6" height="11.6" rx="1" fill="#f3dada"/>
      <rect x="11.6" y="194.3" width="6.6" height="1.8" rx="1" fill="#e7a3a6"/>
      <rect x="11.6" y="204.1" width="6.6" height="1.8" rx="1" fill="#eba8a8"/>
      <rect x="14.4" y="197.8" width=".9" height="2.6" fill="#8a8a8a"/>
      <!-- night -->
      <circle cx="14.6" cy="220" r="4.3" fill="#fff" stroke="#232629" stroke-width=".9"/>
      <path d="M11.56 223.04 A4.3 4.3 0 0 1 17.64 216.96 Z" fill="#232629"/>
      </g>
      <g transform="translate(0 0.1)">
      <!-- about system -->
      <path d="M10.2 252.3 L16.5 252.3 L19 254.8 L19 261.7 L10.2 261.7 Z" fill="#4a7fe0"/>
      <path d="M14 257 L19 257 L19 261.7 L14 261.7 Z" fill="#cfe0f7"/>
      <!-- power -->
      <rect x="9" y="274.8" width="11.5" height="5.6" rx="2.2" fill="#e8f6e8" stroke="#8fd08f" stroke-width="1.1"/>
      <!-- users -->
      <rect x="9.6" y="292.8" width="10.8" height="8.6" rx="1.8" fill="#72aeec"/><rect x="9.6" y="297" width="10.8" height="4.4" rx="1.8" fill="#8cc0f2"/>
      <rect x="14.4" y="295" width="1.4" height="4.5" fill="#f2f8ff"/>
      </g>
    </svg>
    <!-- section headers -->
    <div class="t b" style="left:8.5px;top:92.7px;color:#3b3e41">Язык и время</div>
    <div class="hline" style="left:64px;top:96px;width:75px;background:#e4e4e4"></div>
    <div class="t b" style="left:8.5px;top:190px;color:#3b3e41">Система</div>
    <div class="hline" style="left:45.6px;top:192.5px;width:93.4px;background:#e4e4e4"></div>
    <!-- items: baseline local (global-133), top = baseline-133-46 - 6.3 -->
    <div class="t" style="left:24.6px;top:14.0px">Блокировка экрана</div>
    <div class="t" style="left:24.6px;top:33.7px">Права доступа приложений</div>
    <div class="t" style="left:24.6px;top:53.4px">Бумажник</div>
    <div class="t" style="left:24.6px;top:73.1px">Последние файлы</div>
    <div class="t" style="left:24.6px;top:111.2px">Региональные и языковые ...</div>
    <div class="t" style="left:24.6px;top:130.4px">Проверка орфографии</div>
    <div class="t" style="left:24.6px;top:150.7px">Дата и время</div>
    <div class="t" style="left:24.6px;top:170.2px">Смена дня и ночи</div>
    <div class="t" style="left:24.6px;top:207.6px">О системе</div>
    <div class="t" style="left:24.6px;top:227.7px">Управление питанием</div>
    <div class="t" style="left:24.6px;top:246.7px">Пользователи</div>
    <div class="abs" style="left:6.5px;top:262.9px;width:134.6px;height:15.9px;border-radius:3px;background:#87aedb"></div>
    <div class="t" style="left:24.6px;top:267.1px;color:#dce6f2">Автовход в GDM</div>
    <div class="t" style="left:24.6px;top:287.0px">Автозапуск</div>
    <div class="t" style="left:24.6px;top:306.4px">Сеанс</div>
    <svg class="ic" style="left:0px;top:0px" width="144" height="334" viewBox="0 46 144 334">
      <g transform="translate(0 0.6)">
      <!-- gdm -->
      <rect x="9.8" y="311.7" width="10.2" height="9.5" rx="1" fill="#3a3d40"/>
      <rect x="9.8" y="315.6" width="10.2" height="3.6" fill="#c4c8cc"/><rect x="10.8" y="316.8" width="8.2" height="1.2" fill="#f4f5f6"/>
      <circle cx="14.9" cy="313.6" r="1.3" fill="#4aa3ff"/>
      <!-- autostart -->
      <rect x="10.3" y="331.8" width="8.8" height="8.8" rx="1" fill="#fff" stroke="#232629" stroke-width=".9"/>
      <path d="M13.6 334.3 L16.6 336.2 L13.6 338.1 Z" fill="#232629"/>
      <!-- session -->
      <rect x="9.8" y="351.5" width="10.2" height="9.5" rx="1" fill="#3a3d40"/>
      <rect x="9.8" y="355.4" width="10.2" height="3.6" fill="#c4c8cc"/><rect x="10.8" y="356.6" width="8.2" height="1.2" fill="#f4f5f6"/>
      <circle cx="14.9" cy="353.4" r="1.3" fill="#4aa3ff"/>
      <path d="M132 353.6 L135.3 356.8 L132 360" stroke="#6f7275" stroke-width=".8" fill="none"/>
      </g>
    </svg>
  </div>
  <div id="groove"></div>
  <div id="handle"></div>
  <div class="vline" style="left:156px;top:24px;height:356px"></div>
  <div class="hline" style="left:0;top:46px;width:533px"></div>
  <div class="hline" style="left:156px;top:354px;width:377px"></div>

  <!-- title bar -->
  <svg class="ic" style="left:0px;top:0px" width="533" height="24">
    <g transform="translate(9.6 9.3)" fill="none" stroke="#505356" stroke-width="1.1">
      <path d="M3.20,0.00 L3.23,0.21 L3.32,0.44 L3.44,0.68 L3.57,0.96 L3.68,1.25 L3.74,1.55 L3.73,1.84 L3.64,2.10 L3.46,2.31 L3.22,2.47 L2.93,2.57 L2.62,2.62 L2.31,2.64 L2.04,2.65 L1.80,2.69 L1.60,2.77 L1.43,2.90 L1.28,3.09 L1.13,3.32 L0.96,3.57 L0.76,3.82 L0.53,4.02 L0.27,4.15 L0.00,4.20 L-0.27,4.15 L-0.53,4.02 L-0.76,3.82 L-0.96,3.57 L-1.13,3.32 L-1.28,3.09 L-1.43,2.90 L-1.60,2.77 L-1.80,2.69 L-2.04,2.65 L-2.31,2.64 L-2.62,2.62 L-2.93,2.57 L-3.22,2.47 L-3.46,2.31 L-3.64,2.10 L-3.73,1.84 L-3.74,1.55 L-3.68,1.25 L-3.57,0.96 L-3.44,0.68 L-3.32,0.44 L-3.23,0.21 L-3.20,0.00 L-3.23,-0.21 L-3.32,-0.44 L-3.44,-0.68 L-3.57,-0.96 L-3.68,-1.25 L-3.74,-1.55 L-3.73,-1.84 L-3.64,-2.10 L-3.46,-2.31 L-3.22,-2.47 L-2.93,-2.57 L-2.62,-2.62 L-2.31,-2.64 L-2.04,-2.65 L-1.80,-2.69 L-1.60,-2.77 L-1.43,-2.90 L-1.28,-3.09 L-1.13,-3.32 L-0.96,-3.57 L-0.76,-3.82 L-0.53,-4.02 L-0.27,-4.15 L-0.00,-4.20 L0.27,-4.15 L0.53,-4.02 L0.76,-3.82 L0.96,-3.57 L1.13,-3.32 L1.28,-3.09 L1.43,-2.90 L1.60,-2.77 L1.80,-2.69 L2.04,-2.65 L2.31,-2.64 L2.62,-2.62 L2.93,-2.57 L3.22,-2.47 L3.46,-2.31 L3.64,-2.10 L3.73,-1.84 L3.74,-1.55 L3.68,-1.25 L3.57,-0.96 L3.44,-0.68 L3.32,-0.44 L3.23,-0.21 Z"/>
      <circle r="1.3" stroke-width="1.15"/>
    </g>
    <circle cx="31" cy="9.3" r="4.9" fill="#5d7db5" stroke="#4e6ca3" stroke-width=".5"/>
    <circle cx="480.8" cy="9.2" r="5" fill="#d3d4d5"/>
    <rect x="477.8" y="8.6" width="6" height="1.3" fill="#f4f4f4"/>
    <circle cx="502" cy="9.2" r="5" fill="#d3d4d5"/>
    <path d="M499.5 6.9 L504.5 11.5" stroke="#f4f4f4" stroke-width="1.4"/>
    <circle cx="523.8" cy="9.4" r="5.1" fill="#d2766c"/>
    <path d="M521.6 7.2 L526 11.6 M526 7.2 L521.6 11.6" stroke="#fff" stroke-width="1.3"/>
  </svg>
  <div class="t" style="left:184.2px;top:6.6px;font-size:7.7px;transform:scaleX(.955);transform-origin:0 0;-webkit-text-stroke:.25px currentColor;color:#3a3d40">Автовход в GDM * — Параметры системы</div>

  <!-- toolbar -->
  <div class="abs" style="left:6.2px;top:26.6px;width:126.8px;height:14.6px;box-sizing:border-box;border:1px solid #e1e2e3;border-radius:2.5px;background:#fafafa"></div>
  <svg class="ic" style="left:0px;top:24px" width="160" height="22">
    <circle cx="13.3" cy="8.7" r="2.3" fill="none" stroke="#8d9093" stroke-width=".9"/>
    <path d="M14.9 10.3 L16.8 12.2" stroke="#8d9093" stroke-width="1"/>
    <circle cx="144.1" cy="9.3" r="4.9" fill="none" stroke="#56595c" stroke-width="1.05"/>
    <circle cx="141.8" cy="9.3" r=".7" fill="#56595c"/>
    <circle cx="144.1" cy="9.3" r=".7" fill="#56595c"/>
    <circle cx="146.4" cy="9.3" r=".7" fill="#56595c"/>
  </svg>
  <div class="t" style="left:21px;top:29.8px;font-size:7.8px;transform:scaleX(.955);transform-origin:0 0;-webkit-text-stroke:.25px currentColor;color:#8a8d90">Поиск...</div>
  <div class="t" style="left:167.4px;top:30.1px;font-size:10.4px;transform:scaleX(.962);transform-origin:0 0;-webkit-text-stroke:.3px currentColor;color:#36393c">Автовход в GDM</div>

  <!-- right pane content -->
  <div class="t b" style="left:300.4px;top:60.2px;font-size:8.6px;color:#2a2d30">Автовход в систему</div>
  <div class="hline" style="left:234.7px;top:71px;width:217.3px;background:#d7d8d9"></div>
  <div class="t s r" style="right:228px;top:76.5px">Включить автовход:</div>
  <div class="abs" style="left:311px;top:75.2px;width:9px;height:8.5px;box-sizing:border-box;border:1px solid #9fc4e6;border-radius:2px;background:#cfe2f3"></div>
  <svg class="ic" style="left:311px;top:75px" width="10" height="10">
    <path d="M1.9 4.4 L3.9 6.4 L7.6 2.3" stroke="#232629" stroke-width="1.25" fill="none"/>
  </svg>
  <div class="t s r" style="right:228px;top:92.6px">Пользователь:</div>
  <div class="abs" style="left:311px;top:87.5px;width:140.5px;height:17px;box-sizing:border-box;border:1px solid #dcdddf;border-radius:3px;background:#fafafa"></div>
  <div class="t s" style="left:312.7px;top:92.6px">admin</div>
  <svg class="ic" style="left:440px;top:93px" width="10" height="8">
    <path d="M1.8 2.4 L4.9 5.4 L8 2.4" stroke="#505356" stroke-width="1.05" fill="none"/>
  </svg>
  <!-- popup -->
  <div class="abs" style="left:309.6px;top:105.2px;width:142px;height:41.3px;box-sizing:border-box;border:1px solid #d3d4d6;border-radius:2px;background:#f2f3f4;box-shadow:0 1px 2px rgba(0,0,0,.25)"></div>
  <div class="abs" style="left:315px;top:110.4px;width:134.5px;height:13.2px;box-sizing:border-box;border:1px solid #a9cbe4;border-radius:2px;background:#cfe1ee"></div>
  <div class="t s" style="left:317.8px;top:113px">admin</div>
  <div class="t s" style="left:317.8px;top:130.1px">Другой пользователь...</div>

  <!-- footer -->
  <div class="btn" style="left:160.8px;top:357.7px;width:45.8px;height:16.3px"></div>
  <svg class="ic" style="left:166px;top:361px" width="12" height="12">
    <path d="M5 1.6 L3.2 3.4 L5 5.2" stroke="#4d5053" stroke-width=".9" fill="none"/>
    <path d="M3.4 3.4 L5.6 3.4 A2.6 2.6 0 0 1 5.6 8.6 L4.6 8.6" stroke="#4d5053" stroke-width=".9" fill="none"/>
  </svg>
  <div class="t" style="left:179.4px;top:362.2px;font-size:7.3px">Сброс</div>
  <div class="btn" style="left:468.2px;top:357.7px;width:58.2px;height:16.2px"></div>
  <svg class="ic" style="left:471px;top:362px" width="12" height="10">
    <path d="M1.6 5.2 L3.7 7.4 L8.2 2.4" stroke="#4d5053" stroke-width=".9" fill="none"/>
  </svg>
  <div class="t" style="left:482.8px;top:362.6px;font-size:7.55px">Применить</div>
</div>
</body></html>
